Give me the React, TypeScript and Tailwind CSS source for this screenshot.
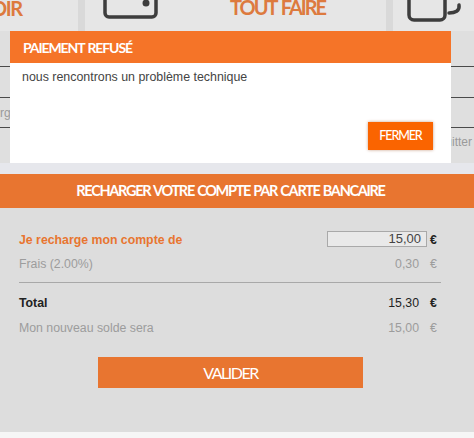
function Row({ label, value, tone, euro, children }: { label: string; value?: string; tone: string; euro: string; children?: React.ReactNode }) {
  return (
    <div className={`flex h-[24px] items-center text-[12.3px] ${tone}`}>
      <span className="flex-1">{label}</span>
      {children ?? <span className="mr-[8px] font-normal">{value}</span>}
      <span className={`w-[24px] pl-[3px] text-[12.3px] ${euro}`}>€</span>
    </div>
  );
}

function BackRow({ left, right, height }: { left?: string; right?: string; height: string }) {
  return (
    <div className={`flex items-center justify-between border-b border-[#4a4a4a] text-[12px] text-[#9a9a9a] ${height}`}>
      <span>{left}</span>
      <span className="pr-[2px]">{right}</span>
    </div>
  );
}

const brand = "font-['Lato','Liberation_Sans',sans-serif]";

export default function App() {
  return (
    <div className="relative flex h-[438px] w-[474px] flex-col overflow-hidden bg-[#f6f6f6] font-['Liberation_Sans',Arial,sans-serif]">
      <div className="h-[163px] bg-[#dfdfdf]">
        <div className="flex h-[31px] gap-[7px] bg-[#d9d9d9]">
          <div className={`flex h-full w-[78px] items-end overflow-hidden bg-[#e6e6e6] pb-[13px] ${brand} text-[20px] leading-none font-bold tracking-[-1.4px] text-[#dd7a3e]`}>
            <span className="-ml-[9px]">OIR</span>
          </div>
          <div className="flex h-full w-[301px] items-start overflow-hidden bg-[#e6e6e6]">
            <svg width="60" height="20" viewBox="0 0 60 20" className="ml-[16px] shrink-0" fill="none">
              <rect x="4" y="-20" width="51" height="37" rx="4" stroke="#3d3d3d" strokeWidth="3.5" />
              <circle cx="45" cy="3" r="3.5" fill="#3d3d3d" />
            </svg>
            <span className={`ml-[69px] mt-[-3px] ${brand} text-[20px] leading-[21px] font-bold tracking-[-2px] [word-spacing:2px] whitespace-nowrap text-[#dd7a3e]`}>TOUT FAIRE</span>
          </div>
          <div className="flex h-full flex-1 items-start overflow-hidden bg-[#e6e6e6]">
            <svg width="60" height="24" viewBox="0 0 60 24" className="ml-[13px] shrink-0" fill="none">
              <rect x="3" y="-18" width="36" height="38" rx="5" stroke="#3d3d3d" strokeWidth="3.5" />
              <path d="M43 13c6 0 11-2 10-8" stroke="#3d3d3d" strokeWidth="3.5" strokeLinecap="round" />
            </svg>
          </div>
        </div>
        <BackRow height="h-[36px]" />
        <BackRow height="h-[31px]" />
        <BackRow height="h-[30px]" left="rgi" />
        <div className="flex h-[35px] items-center justify-end pr-[2px] pb-[8px] text-[12px] text-[#9a9a9a]">Quitter</div>
      </div>
      <div className="h-[11px] bg-[#e6e7ec]" />
      <div className={`flex h-[34px] items-center justify-center bg-[#e87530] pr-[13px] ${brand} text-[14.5px] font-bold tracking-[-1.3px] [word-spacing:1px] whitespace-nowrap text-white`}>
        RECHARGER VOTRE COMPTE PAR CARTE BANCAIRE
      </div>
      <div className="flex h-[224px] flex-col bg-[#dddddd] pt-[20px] pr-[23px] pl-[19px]">
        <Row label="Je recharge mon compte de" tone="font-bold text-[#e87530]" euro="text-[#222]">
          <span className="mb-[2px] h-[16px] w-[100px] border border-[#a9a9a9] bg-[#e9e9e9] pr-[5px] text-right text-[13px] leading-[14px] font-normal text-[#444]">15,00</span>
        </Row>
        <Row label="Frais (2.00%)" value="0,30" tone="text-[#9c9c9c]" euro="text-[#9c9c9c]" />
        <div className="mt-[6px] mb-[8px] h-px w-[422px] bg-[#a8a8a8]" />
        <Row label="Total" value="15,30" tone="font-bold text-[#222]" euro="text-[#222]" />
        <div className="mt-[1px]">
          <Row label="Mon nouveau solde sera" value="15,00" tone="text-[#9c9c9c]" euro="text-[#9c9c9c]" />
        </div>
        <button className={`mt-[17px] ml-[79px] h-[31px] w-[265px] bg-[#e87530] ${brand} text-[16px] tracking-[-1.5px] text-white`}>VALIDER</button>
      </div>
      <div className="absolute left-[10px] top-[31px] h-[132px] w-[441px] bg-white">
        <div className={`flex h-[32px] items-center bg-[#f57428] pl-[13px] ${brand} text-[14px] font-bold tracking-[-1.1px] [word-spacing:1px] text-white`}>PAIEMENT REFUSÉ</div>
        <p className="pl-[12px] pt-[5px] text-[12.4px] text-[#444]">nous rencontrons un problème technique</p>
        <button className={`absolute left-[358px] top-[91px] h-[28px] w-[65px] bg-[#fa6400] ${brand} text-[12.5px] font-medium tracking-[-1.1px] text-white shadow-[0_0_3px_#c9a08a]`}>FERMER</button>
      </div>
    </div>
  );
}
